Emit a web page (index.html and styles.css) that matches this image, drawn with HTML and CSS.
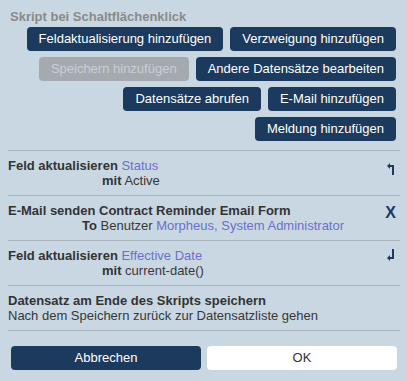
FILE: index.html
```html
<!DOCTYPE html>
<html lang="de">
<head>
  <meta charset="UTF-8">
  <title>Skript bei Schaltflächenklick</title>
  <link rel="stylesheet" href="styles.css">
</head>
<body>
  <div class="page">
    <h3 class="title">Skript bei Schaltflächenklick</h3>

    <div class="actions">
      <button class="btn">Feldaktualisierung hinzufügen</button>
      <button class="btn">Verzweigung hinzufügen</button>
      <button class="btn" disabled>Speichern hinzufügen</button>
      <button class="btn">Andere Datensätze bearbeiten</button>
      <button class="btn">Datensätze abrufen</button>
      <button class="btn">E-Mail hinzufügen</button>
      <button class="btn">Meldung hinzufügen</button>
    </div>

    <ul class="steps">
      <li class="step">
        <div class="step-text">
          <div><b>Feld aktualisieren</b> <span class="ref">Status</span></div>
          <div class="sub sub-mit"><b>mit</b> Active</div>
        </div>
        <svg class="icon" width="8" height="12" viewBox="0 0 8 12">
          <path d="M0 3 L3 0 L3 6 Z" fill="#1b3a5e"/>
          <rect x="2" y="2" width="5" height="2" fill="#1b3a5e"/>
          <rect x="5" y="2" width="2" height="10" fill="#1b3a5e"/>
        </svg>
      </li>
      <li class="step">
        <div class="step-text">
          <div><b>E-Mail senden Contract Reminder Email Form</b></div>
          <div class="sub sub-to"><b>To</b> Benutzer <span class="ref">Morpheus, System Administrator</span></div>
        </div>
        <span class="icon icon-x">X</span>
      </li>
      <li class="step">
        <div class="step-text">
          <div><b>Feld aktualisieren</b> <span class="ref">Effective Date</span></div>
          <div class="sub sub-mit"><b>mit</b> current-date()</div>
        </div>
        <svg class="icon icon-low" width="8" height="12" viewBox="0 0 8 12">
          <path d="M0 9 L3 6 L3 12 Z" fill="#1b3a5e"/>
          <rect x="2" y="8" width="5" height="2" fill="#1b3a5e"/>
          <rect x="5" y="0" width="2" height="10" fill="#1b3a5e"/>
        </svg>
      </li>
      <li class="step">
        <div class="step-text">
          <div><b>Datensatz am Ende des Skripts speichern</b></div>
          <div>Nach dem Speichern zurück zur Datensatzliste gehen</div>
        </div>
      </li>
    </ul>

    <div class="footer">
      <button class="btn">Abbrechen</button>
      <button class="btn btn-light">OK</button>
    </div>
  </div>
</body>
</html>
```

FILE: styles.css
```css
body { margin: 0; background: #c9d7e3; font-family: "Liberation Sans", Arial, sans-serif; font-size: 13px; line-height: 15px; color: #383838; }
.page { width: 407px; height: 381px; padding-top: 9px; box-sizing: border-box; }
.title { margin: 0 0 3px 10px; font-size: 13px; line-height: 15px; color: #8a8a8a; }

.btn { height: 24px; padding: 0 12px; border: none; border-radius: 4px; background: #1b3a5e; color: #fff; font-family: inherit; font-size: 13px; line-height: 24px; cursor: pointer; }
.btn:disabled { background: #a4aaaf; color: #c8cfd5; cursor: default; }
.btn-light { background: #fff; color: #333; }

.actions { display: flex; flex-wrap: wrap; justify-content: flex-end; gap: 6px 7px; margin: 0 11px 0 10px; }

.steps { list-style: none; margin: 9px 7px 0 8px; padding: 0; border-bottom: 1px solid #a9b3bd; }
.step { display: flex; align-items: flex-start; border-top: 1px solid #a9b3bd; padding: 7px 0; }
.step-text { flex: 1; }
.step b { color: #333; }
.ref { color: #6b70cc; }
.sub-mit { padding-left: 94px; }
.sub-to { padding-left: 74px; }

.icon { margin: 5px 5px 0 0; }
.icon-low { margin-top: 1px; }
.icon-x { margin: 2px 4px 0 0; font-weight: bold; font-size: 16px; color: #1b3a5e; line-height: 16px; }

.footer { display: grid; grid-template-columns: 1fr 1fr; gap: 6px; margin: 15px 10px 0 11px; }
```
